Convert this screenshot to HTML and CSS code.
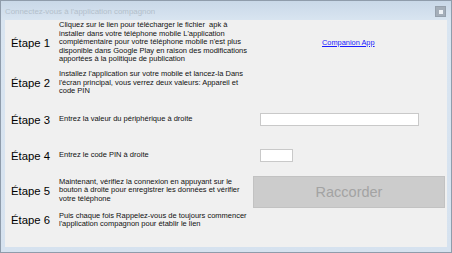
FILE: index.html
```html
<!DOCTYPE html>
<html lang="fr">
<head>
<meta charset="utf-8">
<title>Connectez-vous à l'application compagnon</title>
<link rel="stylesheet" href="styles.css">
</head>
<body>
<div class="window">
  <div class="titlebar">
    <span class="title">Connectez-vous à l'application compagnon</span>
    <span class="close"><span class="close-x"></span></span>
  </div>
  <div class="client">
    <div class="row r1">
      <div class="label">Étape 1</div>
      <div class="desc">
        <span class="line">Cliquez sur le lien pour télécharger le fichier&nbsp; apk à</span>
        <span class="line">installer dans votre téléphone mobile L'application</span>
        <span class="line">complémentaire pour votre téléphone mobile n'est plus</span>
        <span class="line">disponible dans Google Play en raison des modifications</span>
        <span class="line">apportées à la politique de publication</span>
      </div>
      <div class="side"><a class="link" href="#">Companion App</a></div>
    </div>
    <div class="row r2">
      <div class="label">Étape 2</div>
      <div class="desc">
        <span class="line">Installez l'application sur votre mobile et lancez-la Dans</span>
        <span class="line">l'écran principal, vous verrez deux valeurs: Appareil et</span>
        <span class="line">code PIN</span>
      </div>
      <div class="side"></div>
    </div>
    <div class="row r3">
      <div class="label">Étape 3</div>
      <div class="desc">
        <span class="line">Entrez la valeur du périphérique à droite</span>
      </div>
      <div class="side"><input class="field wide" type="text"></div>
    </div>
    <div class="row r4">
      <div class="label">Étape 4</div>
      <div class="desc">
        <span class="line">Entrez le code PIN à droite</span>
      </div>
      <div class="side"><input class="field narrow" type="text"></div>
    </div>
    <div class="row r5">
      <div class="label">Étape 5</div>
      <div class="desc">
        <span class="line">Maintenant, vérifiez la connexion en appuyant sur le</span>
        <span class="line">bouton à droite pour enregistrer les données et vérifier</span>
        <span class="line">votre téléphone</span>
      </div>
      <div class="side"><button class="connect" type="button" disabled>Raccorder</button></div>
    </div>
    <div class="row r6">
      <div class="label">Étape 6</div>
      <div class="desc">
        <span class="line">Puis chaque fois Rappelez-vous de toujours commencer</span>
        <span class="line">l'application compagnon pour établir le lien</span>
      </div>
      <div class="side"></div>
    </div>
  </div>
</div>
</body>
</html>
```
FILE: styles.css
```css
* { box-sizing: border-box; }
html, body { margin: 0; padding: 0; }
body {
  width: 452px;
  height: 253px;
  overflow: hidden;
  font-family: "Liberation Sans", Arial, sans-serif;
  background: #d6e2ef;
}
.window {
  width: 452px;
  height: 253px;
  border: 1px solid #8f9cab;
  background: linear-gradient(#c9d8e8 0px, #d9e5f1 20px, #d6e2ef 100%);
  display: flex;
  flex-direction: column;
}
.titlebar {
  height: 19px;
  flex: none;
  display: flex;
  align-items: center;
  padding: 0 4px 0 4px;
  position: relative;
}
.title {
  font-size: 7.9px;
  color: #b3bfcb;
  margin-top: 2px;
}
.close {
  position: absolute;
  left: 434px;
  top: 5px;
  width: 11px;
  height: 11px;
  background: #a4aeb9;
  border: 1px solid #95a0ac;
  display: flex;
  align-items: center;
  justify-content: center;
}
.close-x {
  width: 4px;
  height: 4px;
  background: #eef2f6;
}
.client {
  margin: 0 4px;
  height: 227px;
  flex: none;
  background: #f0f0f0;
  display: flex;
  flex-direction: column;
}
.row {
  display: grid;
  grid-template-columns: 54px 194px 1fr;
  align-items: center;
}
.r1 { height: 45px; }
.r2 { height: 36px; }
.r3 { height: 37px; }
.r4 { height: 35px; }
.r5 { height: 34px; }
.r6 { height: 26px; }
.label {
  padding-left: 6px;
  font-size: 11.3px;
  color: #000;
  white-space: nowrap;
  line-height: 12px;
}
.desc {
  font-size: 7.5px;
  line-height: 8.5px;
  color: #111;
}
.line {
  display: block;
  white-space: nowrap;
}
.side {
  display: flex;
  align-items: center;
}
.link {
  margin-left: 69px;
  font-size: 7.4px;
  color: #1a1aff;
  text-decoration: underline;
}
.field {
  margin-left: 7px;
  height: 13px;
  border: 1px solid #c9c9c9;
  background: #fff;
  padding: 0;
  font-size: 8px;
}
.wide { width: 159px; }
.narrow { width: 33px; }
.r5 .side { align-self: start; margin-top: 3px; }
.connect {
  width: 192px;
  height: 32px;
  background: #cccccc;
  border: 1px solid #c2c2c2;
  color: #a3a3a3;
  font-family: "Liberation Sans", Arial, sans-serif;
  font-size: 14.5px;
  padding: 0;
}
```
